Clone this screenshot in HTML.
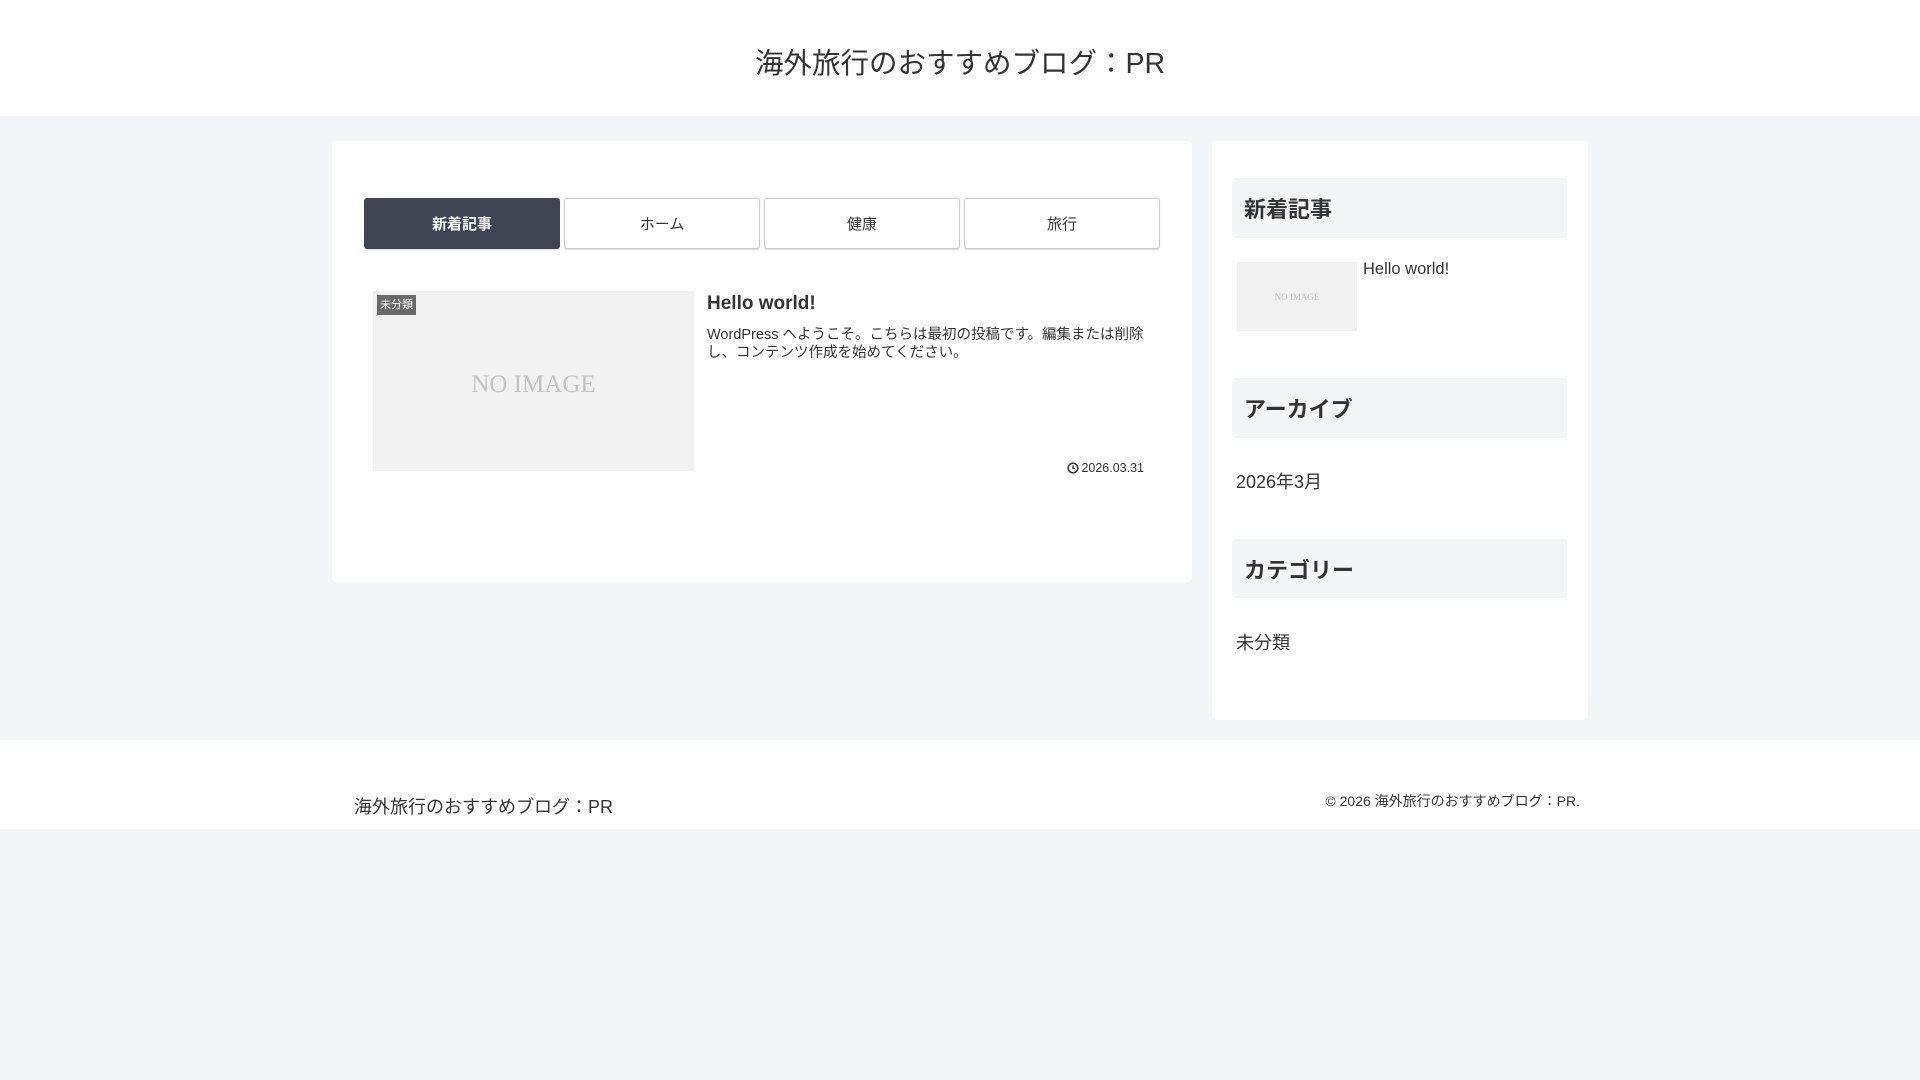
<!DOCTYPE html>
<html><head><meta charset="utf-8"><style>
*{margin:0;padding:0;box-sizing:border-box}
body{width:1920px;height:1080px;background:#f4f5f7;font-family:"Liberation Sans","Noto Sans CJK JP",sans-serif;color:#333;position:relative;overflow:hidden}
.a{position:absolute;white-space:nowrap}
#hdr{position:absolute;left:0;top:0;width:1920px;height:116px;background:#fff}
.card{position:absolute;background:#fff;border-radius:4px}
.tab{position:absolute;top:198px;height:51px;width:196px;border:1px solid #ccc;border-radius:3px;background:#fff;box-shadow:0 1px 1px rgba(0,0,0,.15);font-size:15px;display:flex;align-items:center;justify-content:center;color:#333}
.tab.on{background:#404452;border-color:#404452;color:#fff;font-weight:bold}
.noimg{position:absolute;background:#f1f1f1;color:#c4c4c4;font-family:"Liberation Serif",serif;display:flex;align-items:center;justify-content:center}
.wh{position:absolute;left:1232px;width:335px;background:#f4f5f7;border-radius:3px;font-size:22px;font-weight:bold;padding-left:12px;display:flex;align-items:center}
#ftr{position:absolute;left:0;top:740px;width:1920px;height:89px;background:#fff}
</style></head><body>
<div id="hdr"></div>
<div class="a" style="left:0;width:1920px;text-align:center;top:41px;font-size:28.5px;color:#333">海外旅行のおすすめブログ：PR</div>

<div class="card" style="left:332px;top:141px;width:860px;height:441px"></div>
<div class="tab on" style="left:364px">新着記事</div>
<div class="tab" style="left:564px">ホーム</div>
<div class="tab" style="left:764px">健康</div>
<div class="tab" style="left:964px">旅行</div>

<div class="noimg" style="left:373px;top:291px;width:321px;height:180px;font-size:25px;padding-top:8px">NO IMAGE</div>
<div class="a" style="left:377px;top:295px;width:39px;height:20px;background:#6a6a6a;color:#fff;font-size:11px;line-height:20px;text-align:center">未分類</div>
<div class="a" style="left:707px;top:293px;font-size:19px;font-weight:bold">Hello world!</div>
<div class="a" style="left:707px;top:326px;font-size:14.5px;line-height:18px">WordPress へようこそ。こちらは最初の投稿です。編集または削除<br>し、コンテンツ作成を始めてください。</div>
<div class="a" style="right:776px;top:461px;font-size:12.5px;display:flex;align-items:center;gap:2px"><svg width="12" height="12" viewBox="0 0 12 12"><circle cx="6" cy="6" r="4.8" fill="none" stroke="#333" stroke-width="1.5"/><path d="M6 3.2V6.3H8" fill="none" stroke="#333" stroke-width="1.3"/></svg>2026.03.31</div>

<div class="card" style="left:1212px;top:141px;width:376px;height:579px"></div>
<div class="wh" style="top:178px;height:60px">新着記事</div>
<div class="noimg" style="left:1237px;top:262px;width:120px;height:69px;font-size:9px">NO IMAGE</div>
<div class="a" style="left:1363px;top:260px;font-size:16.5px">Hello world!</div>
<div class="wh" style="top:378px;height:60px">アーカイブ</div>
<div class="a" style="left:1236px;top:468px;font-size:18px">2026年3月</div>
<div class="wh" style="top:539px;height:59px">カテゴリー</div>
<div class="a" style="left:1236px;top:629px;font-size:18px">未分類</div>

<div id="ftr"></div>
<div class="a" style="left:354px;top:793px;font-size:18px">海外旅行のおすすめブログ：PR</div>
<div class="a" style="right:340px;top:791px;font-size:14px">© 2026 海外旅行のおすすめブログ：PR.</div>
</body></html>
